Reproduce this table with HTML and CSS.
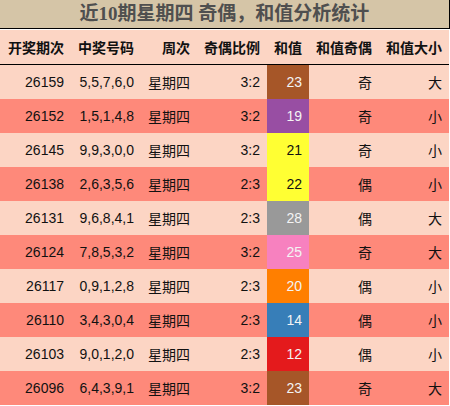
FILE: index.html
```html
<!DOCTYPE html>
<html lang="zh">
<head>
<meta charset="utf-8">
<title>近10期星期四 奇偶，和值分析统计</title>
<link rel="stylesheet" href="styles.css">
</head>
<body>
<div class="wrap">
  <div class="title">近10期星期四 奇偶，和值分析统计</div>
  <table class="stats">
    <colgroup>
      <col class="c1"><col class="c2"><col class="c3"><col class="c4"><col class="c5"><col class="c6"><col class="c7">
    </colgroup>
    <thead>
      <tr><th>开奖期次</th><th>中奖号码</th><th>周次</th><th>奇偶比例</th><th>和值</th><th>和值奇偶</th><th>和值大小</th></tr>
    </thead>
    <tbody>
      <tr class="lt"><td>26159</td><td>5,5,7,6,0</td><td>星期四</td><td>3:2</td><td class="sum brown">23</td><td>奇</td><td>大</td></tr>
      <tr class="dk"><td>26152</td><td>1,5,1,4,8</td><td>星期四</td><td>3:2</td><td class="sum purple">19</td><td>奇</td><td>小</td></tr>
      <tr class="lt"><td>26145</td><td>9,9,3,0,0</td><td>星期四</td><td>3:2</td><td class="sum yellow">21</td><td>奇</td><td>小</td></tr>
      <tr class="dk"><td>26138</td><td>2,6,3,5,6</td><td>星期四</td><td>2:3</td><td class="sum yellow">22</td><td>偶</td><td>小</td></tr>
      <tr class="lt"><td>26131</td><td>9,6,8,4,1</td><td>星期四</td><td>2:3</td><td class="sum gray">28</td><td>偶</td><td>大</td></tr>
      <tr class="dk"><td>26124</td><td>7,8,5,3,2</td><td>星期四</td><td>3:2</td><td class="sum pink">25</td><td>奇</td><td>大</td></tr>
      <tr class="lt"><td>26117</td><td>0,9,1,2,8</td><td>星期四</td><td>2:3</td><td class="sum orange">20</td><td>偶</td><td>小</td></tr>
      <tr class="dk"><td>26110</td><td>3,4,3,0,4</td><td>星期四</td><td>2:3</td><td class="sum blue">14</td><td>偶</td><td>小</td></tr>
      <tr class="lt"><td>26103</td><td>9,0,1,2,0</td><td>星期四</td><td>2:3</td><td class="sum red">12</td><td>偶</td><td>小</td></tr>
      <tr class="dk"><td>26096</td><td>6,4,3,9,1</td><td>星期四</td><td>3:2</td><td class="sum brown">23</td><td>奇</td><td>大</td></tr>
    </tbody>
  </table>
</div>
</body>
</html>
```
FILE: styles.css
```css
html, body {
  margin: 0;
  padding: 0;
  background: #ffffff;
}
.wrap {
  width: 450px;
}
.title {
  height: 28px;
  line-height: 28px;
  background: #d5c5a7;
  border-right: 1px solid #000;
  border-bottom: 1px solid #000;
  text-align: center;
  font-family: "Liberation Serif", "Noto Sans CJK SC", serif;
  font-weight: bold;
  font-size: 19px;
  color: #4f4f4f;
  margin-bottom: 1px;
}
.stats {
  width: 449px;
  table-layout: fixed;
  border-collapse: collapse;
  border-spacing: 0;
  font-family: "Liberation Sans", "Noto Sans CJK SC", sans-serif;
  font-size: 14px;
  color: #111;
}
.c1 { width: 71px; }
.c2 { width: 70px; }
.c3 { width: 56px; }
.c4 { width: 70px; }
.c5 { width: 42px; }
.c6 { width: 70px; }
.c7 { width: 70px; }
.stats th,
.stats td {
  padding: 0 7px;
  text-align: right;
  vertical-align: middle;
  white-space: nowrap;
  overflow: hidden;
}
.stats thead tr {
  background: #fcd5c4;
  height: 34px;
  border-bottom: 1px solid #000;
}
.stats th {
  font-family: "Noto Sans CJK SC", sans-serif;
  font-weight: bold;
  font-size: 14px;
  height: 34px;
  color: #111;
}
.stats tbody tr {
  height: 34px;
}
.stats td {
  height: 34px;
}
.lt { background: #fcd5c4; }
.dk { background: #fe897a; }
.sum { color: #f4f4f4; }
.brown { background: #a65628; }
.purple { background: #984ea3; }
.yellow { background: #ffff33; color: #111; }
.gray { background: #999999; }
.pink { background: #f781bf; }
.orange { background: #ff7f00; }
.blue { background: #377eb8; }
.red { background: #e41a1c; }
```
